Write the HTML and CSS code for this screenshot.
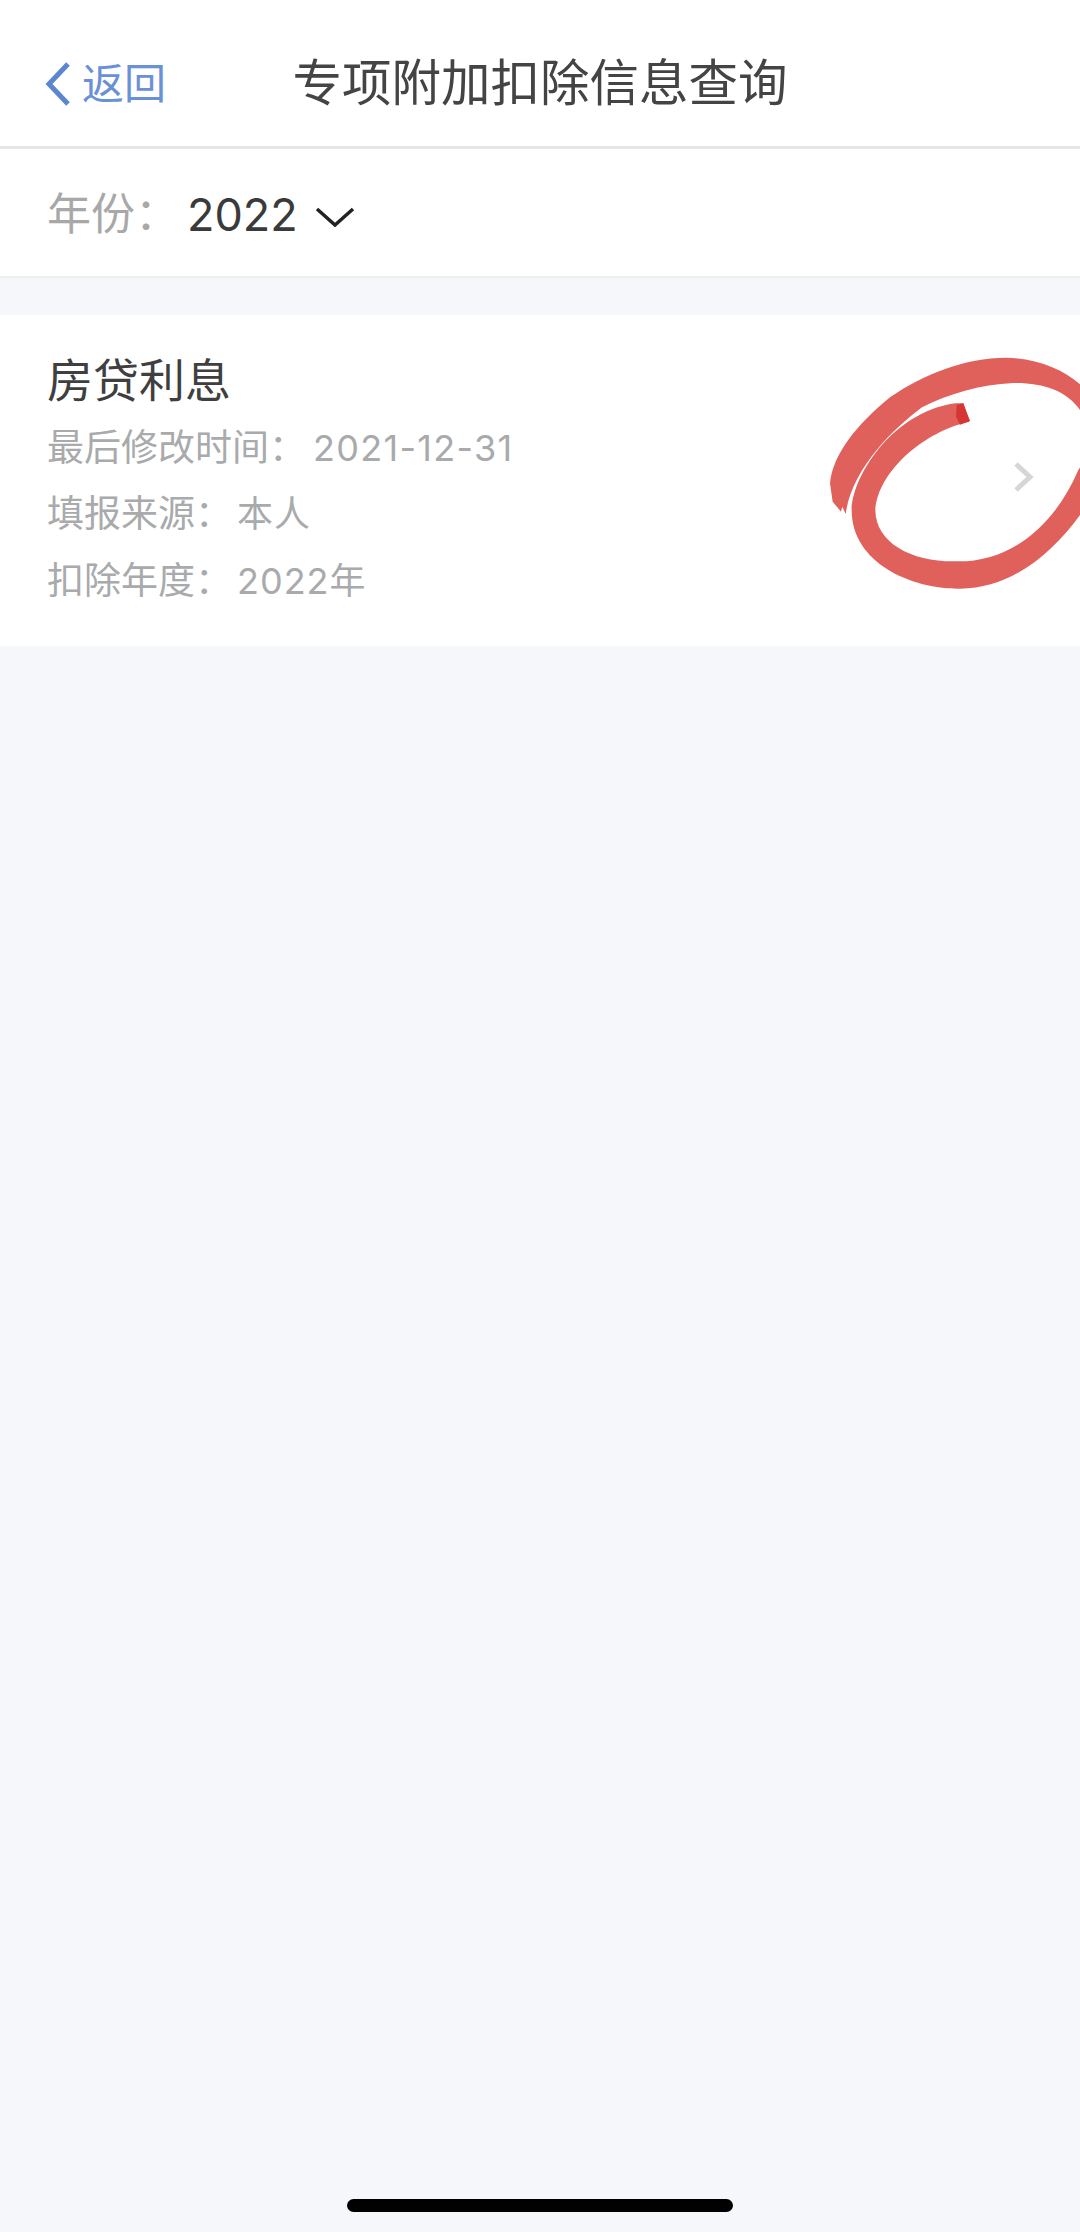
FILE: index.html
```html
<!DOCTYPE html>
<html lang="zh-CN">
<head>
<meta charset="utf-8">
<title>专项附加扣除信息查询</title>
<link rel="stylesheet" href="styles.css">
</head>
<body>
<div class="page">
  <header class="nav">
    <div class="back">
      <svg class="back-icon" viewBox="0 0 26 44"><path d="M23 2 4 22l19 20"/></svg>
      <span class="back-text">返回</span>
    </div>
    <h1 class="nav-title">专项附加扣除信息查询</h1>
    <div class="nav-end"></div>
  </header>
  <section class="year-bar">
    <span class="year-label">年份：</span>
    <span class="year-value">2022</span>
    <svg class="year-icon" viewBox="0 0 40 20"><path d="M2 2l18 16L38 2"/></svg>
  </section>
  <section class="card">
    <div class="card-body">
      <div class="card-title">房贷利息</div>
      <div class="card-line">最后修改时间：<span class="card-value card-date">2021-12-31</span></div>
      <div class="card-line">填报来源：<span class="card-value">本人</span></div>
      <div class="card-line">扣除年度：<span class="card-value">2022年</span></div>
    </div>
    <svg class="card-arrow" viewBox="0 0 20 30"><path d="M2 2l14 13L2 28"/></svg>
  </section>
  <div class="home-bar"></div>
  <svg class="mark" viewBox="0 0 900 900" aria-hidden="true">
    <path class="mark-stroke" d="M158 545L150 490C158 405 228 315 330 232C430 162 560 112 680 113C770 116 850 148 900 193L960 220L960 600L900 585C820 695 700 804 540 806C400 808 215 732 215 570C215 478 330 278 525 250L550 250L568 305C430 335 294 455 286 570C287 672 400 727 530 724C670 727 812 642 895 450L930 400L930 300L900 270C860 212 790 188 700 189C600 193 505 222 426 262C338 328 216 446 197 582L187 560L183 575Z"/>
    <path class="mark-end" d="M530 255L550 250L570 303L540 314L528 290Z"/>
  </svg>
</div>
</body>
</html>
```

FILE: styles.css
```css
* { box-sizing: border-box; margin: 0; padding: 0; }

html, body { width: 1080px; height: 2232px; overflow: hidden; }

body {
  background: #f5f7fb;
  font-family: Inter, "Noto Sans CJK SC", "Noto Sans", sans-serif;
}

.page {
  position: relative;
  display: flex;
  flex-direction: column;
  width: 1080px;
  height: 2232px;
  overflow: hidden;
}

.nav {
  display: grid;
  grid-template-columns: 1fr auto 1fr;
  align-items: center;
  height: 149px;
  padding-top: 22px;
  background: #fff;
  border-bottom: 3px solid #e6e6e8;
}

.back { display: flex; align-items: center; gap: 11px; padding-left: 45px; }

.back-icon { width: 26px; height: 44px; }
.back-icon path { fill: none; stroke: #5b87d0; stroke-width: 5; }

.back-text { font-size: 42px; line-height: 1; color: #6a90d8; }

.nav-title {
  font-size: 49.5px;
  font-weight: 400;
  line-height: 1;
  white-space: nowrap;
  color: #444;
}

.year-bar {
  display: flex;
  align-items: center;
  height: 129px;
  padding: 3px 0 0 47px;
  background: #fff;
  border-bottom: 2px solid #efefef;
}

.year-label { width: 140px; font-size: 44px; line-height: 1; color: #a8a8a8; }

.year-value { font-size: 45px; line-height: 1; color: #3a3a3a; }

.year-icon { width: 40px; height: 20px; margin: 6px 0 0 17px; }
.year-icon path { fill: none; stroke: #222; stroke-width: 3.5; }

.card {
  display: flex;
  align-items: center;
  justify-content: space-between;
  height: 331px;
  margin-top: 37px;
  padding: 0 46px 0 47px;
  background: #fff;
}

.card-body { display: flex; flex-direction: column; margin-top: 6px; }

.card-title {
  margin-bottom: 8px;
  font-size: 46px;
  line-height: 54px;
  color: #3f3f3f;
}

.card-line {
  font-size: 37px;
  line-height: 66.5px;
  white-space: nowrap;
  color: #a9aaac;
}

.card-value { margin-left: 5px; font-size: 36px; letter-spacing: 1px; }

.card-date { margin-left: 7px; letter-spacing: 1.3px; }

.card-arrow { width: 20px; height: 30px; margin-top: -8px; }
.card-arrow path { fill: none; stroke: #d6d6d6; stroke-width: 5; }

.home-bar {
  width: 386px;
  height: 13px;
  margin: auto auto 20px;
  border-radius: 7px;
  background: #000;
}

.mark {
  position: absolute;
  top: 320px;
  left: 780px;
  width: 300px;
  height: 300px;
}

.mark-stroke { fill: #e0605c; }
.mark-end { fill: #d63633; }
```
